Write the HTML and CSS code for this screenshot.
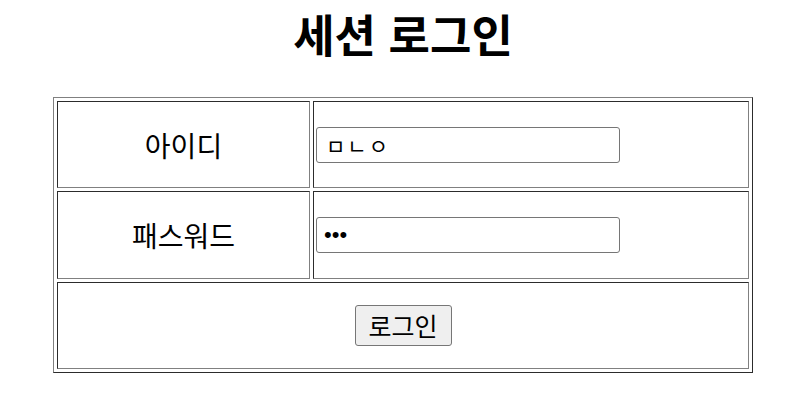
FILE: index.html
```html
<!DOCTYPE html>
<html lang="ko">
<head>
    <meta charset="UTF-8">
    <meta name="viewport" content="width=device-width, initial-scale=1.0">
    <title>세션 로그인</title>
    <link rel="stylesheet" href="styles.css">
</head>
<body>
    <h1 class="title">세션 로그인</h1>
    <form class="login-form">
        <table class="login-table">
            <tr>
                <td class="label-cell">아이디</td>
                <td class="input-cell"><input type="text" class="field" name="id" value="ㅁㄴㅇ"></td>
            </tr>
            <tr>
                <td class="label-cell">패스워드</td>
                <td class="input-cell"><input type="password" class="field field-pw" name="pw" value="123"></td>
            </tr>
            <tr>
                <td class="button-cell" colspan="2"><button type="submit" class="btn">로그인</button></td>
            </tr>
        </table>
    </form>
</body>
</html>
```

FILE: styles.css
```css
body {
    margin: 8px 1px 8px 15px;
    font-family: "Noto Sans CJK KR", "Noto Sans", sans-serif;
    color: #000000;
    background-color: #ffffff;
}

.title {
    text-align: center;
    font-size: 45px;
    font-weight: bold;
    margin: 0 0 37px;
    line-height: 52px;
}

.login-form {
    margin: 0;
}

.login-table {
    width: 700px;
    margin: 0 auto;
    border: 1px outset gray;
    border-spacing: 3px;
}

.login-table td {
    border: 1px inset gray;
    padding: 1px;
    height: 83.4px;
}

.label-cell {
    width: 249px;
    text-align: center;
    font-size: 28px;
}

.field {
    box-sizing: border-box;
    width: 304px;
    height: 36px;
    padding: 1px 8px 1px 9px;
    border: 1px solid #767676;
    border-radius: 3px;
    font-family: "Noto Sans CJK KR", sans-serif;
    font-size: 21px;
    letter-spacing: 2px;
    margin: 0 0 0 1px;
}

.field-pw {
    padding-left: 7px;
    font-family: "Liberation Sans", sans-serif;
    font-size: 22px;
    letter-spacing: 0;
}

.button-cell {
    text-align: center;
}

.btn {
    box-sizing: border-box;
    width: 97px;
    height: 41px;
    background-color: #efefef;
    border: 1px solid #767676;
    border-radius: 3px;
    font-family: "Noto Sans CJK KR", sans-serif;
    font-size: 25px;
    padding: 0;
}
```
